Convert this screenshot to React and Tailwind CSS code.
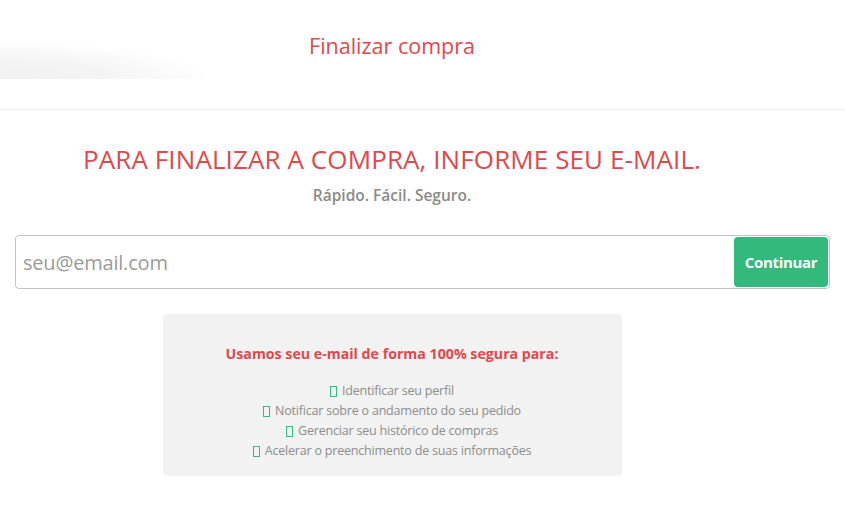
import { useState } from "react";

const items = [
    "Identificar seu perfil",
    "Notificar sobre o andamento do seu pedido",
    "Gerenciar seu histórico de compras",
    "Acelerar o preenchimento de suas informações",
];

const Box = () => (
    <span className="inline-block w-[7px] h-[11px] border border-[#2fbf7c] mr-[5px]" />
);

const App = () => {
    const [email, setEmail] = useState("");

    return (
        <div className="min-h-[510px] bg-white font-['Open_Sans',sans-serif]">
            {/* Header */}

            <div className="relative h-[110px] border-b border-[#efefef]">
                <div className="absolute left-0 top-[40px] w-[260px] h-[39px] bg-[radial-gradient(ellipse_215px_38px_at_0%_100%,#f0f0f0_0%,#f4f4f4_50%,rgba(255,255,255,0)_100%)]" />
                <div className="relative w-[784px] pt-[31px] text-center">
                    <h1 className="text-[21.5px] leading-[30px] text-[#e2474b]">
                        Finalizar compra
                    </h1>
                </div>
            </div>

            {/* Body */}

            <div className="w-[784px] pt-[32px] text-center">
                <h2 className="text-[26px] leading-[34px] text-[#e2474b] tracking-[0.1px]">
                    PARA FINALIZAR A COMPRA, INFORME SEU E-MAIL.
                </h2>
                <p className="mt-[9px] text-[15.5px] leading-[20px] font-semibold text-[#8a8a8a]">
                    Rápido. Fácil. Seguro.
                </p>
            </div>

            <div className="mx-[15px] mt-[30px] h-[54px] flex items-center border border-[#c4c4c4] rounded-[4px] p-[1px]">
                <input
                    autoFocus
                    value={email}
                    onChange={(e) => setEmail(e.target.value)}
                    placeholder="seu@email.com"
                    className="flex-1 h-full pl-[6px] text-[20px] text-[#555] placeholder:text-[#9a9a9a] outline-none bg-transparent tracking-[-0.2px]"
                />
                <button className="w-[94px] h-[50px] bg-[#33b97b] rounded-[4px] text-white text-[15px] font-bold tracking-[-0.3px]">
                    Continuar
                </button>
            </div>

            {/* Info */}

            <div className="w-[784px] mt-[25px] flex justify-center">
                <div className="w-[459px] h-[162px] bg-[#f2f2f2] rounded-[4px] pt-[30px] text-center">
                    <h3 className="text-[14.2px] leading-[20px] font-bold text-[#e2474b]">
                        Usamos seu e-mail de forma 100% segura para:
                    </h3>
                    <ul className="mt-[17px] text-[12.5px] leading-[20px] text-[#8c8c8c] tracking-[-0.2px]">
                        {items.map((item) => (
                            <li key={item} className="flex items-center justify-center">
                                <Box />
                                {item}
                            </li>
                        ))}
                    </ul>
                </div>
            </div>
        </div>
    );
};

export default App;
